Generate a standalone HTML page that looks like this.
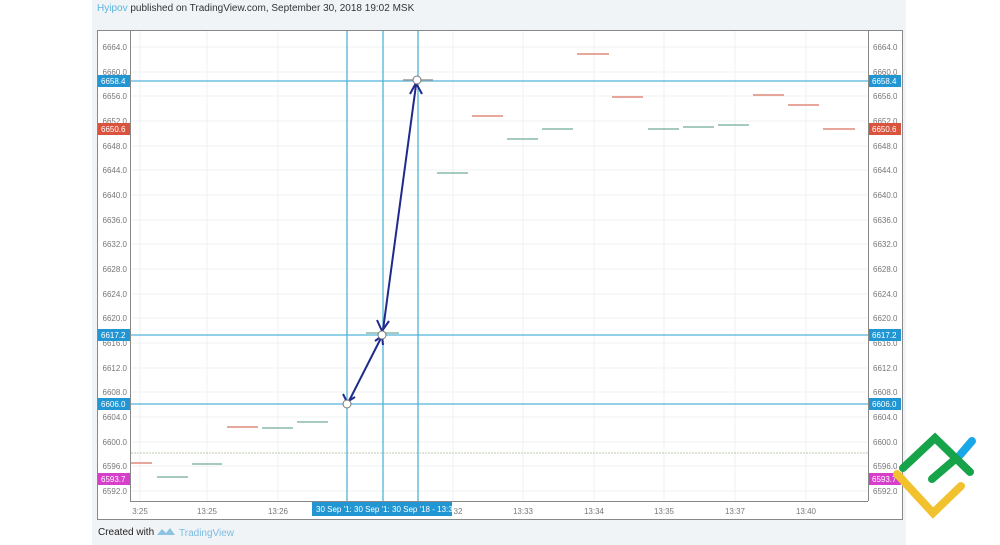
<!DOCTYPE html>
<html><head><style>
body{margin:0;width:1000px;height:545px;background:#fff;position:relative;overflow:hidden;font-family:"Liberation Sans",sans-serif}
.panel{position:absolute;left:92px;top:0;width:814px;height:545px;background:#f1f4f7}
.hdr{position:absolute;left:97px;top:3px;font-size:10px;color:#333}
.ftr{position:absolute;left:98px;top:527px;font-size:10px;color:#222}
</style></head><body>
<div class="panel"></div>
<div class="hdr"><span style="color:#5ab4dc">Hyipov</span> published on TradingView.com, September 30, 2018 19:02 MSK</div>
<svg style="position:absolute;left:0;top:0" width="1000" height="545" font-family="Liberation Sans, sans-serif">
<rect x="97.5" y="30.5" width="805" height="489" fill="#fff" stroke="#888"/>
<line x1="130.5" y1="30" x2="130.5" y2="501" stroke="#888"/>
<line x1="868.5" y1="30" x2="868.5" y2="501" stroke="#888"/>
<line x1="130" y1="501.5" x2="868" y2="501.5" stroke="#888"/>
<g stroke="#eef1f4">
<line x1="131" y1="47" x2="868" y2="47"/><line x1="131" y1="72" x2="868" y2="72"/><line x1="131" y1="96" x2="868" y2="96"/><line x1="131" y1="121" x2="868" y2="121"/><line x1="131" y1="146" x2="868" y2="146"/><line x1="131" y1="170" x2="868" y2="170"/><line x1="131" y1="195" x2="868" y2="195"/><line x1="131" y1="220" x2="868" y2="220"/><line x1="131" y1="244" x2="868" y2="244"/><line x1="131" y1="269" x2="868" y2="269"/><line x1="131" y1="294" x2="868" y2="294"/><line x1="131" y1="318" x2="868" y2="318"/><line x1="131" y1="343" x2="868" y2="343"/><line x1="131" y1="368" x2="868" y2="368"/><line x1="131" y1="392" x2="868" y2="392"/><line x1="131" y1="417" x2="868" y2="417"/><line x1="131" y1="442" x2="868" y2="442"/><line x1="131" y1="466" x2="868" y2="466"/><line x1="131" y1="491" x2="868" y2="491"/>
<line x1="140" y1="31" x2="140" y2="501"/><line x1="207" y1="31" x2="207" y2="501"/><line x1="278" y1="31" x2="278" y2="501"/><line x1="453" y1="31" x2="453" y2="501"/><line x1="523" y1="31" x2="523" y2="501"/><line x1="594" y1="31" x2="594" y2="501"/><line x1="664" y1="31" x2="664" y2="501"/><line x1="735" y1="31" x2="735" y2="501"/><line x1="806" y1="31" x2="806" y2="501"/>
</g>
<g font-size="8" fill="#777">
<g text-anchor="end">
<text x="127" y="50">6664.0</text><text x="127" y="75">6660.0</text><text x="127" y="99">6656.0</text><text x="127" y="124">6652.0</text><text x="127" y="149">6648.0</text><text x="127" y="173">6644.0</text><text x="127" y="198">6640.0</text><text x="127" y="223">6636.0</text><text x="127" y="247">6632.0</text><text x="127" y="272">6628.0</text><text x="127" y="297">6624.0</text><text x="127" y="321">6620.0</text><text x="127" y="346">6616.0</text><text x="127" y="371">6612.0</text><text x="127" y="395">6608.0</text><text x="127" y="420">6604.0</text><text x="127" y="445">6600.0</text><text x="127" y="469">6596.0</text><text x="127" y="494">6592.0</text>
</g>
<text x="873" y="50">6664.0</text><text x="873" y="75">6660.0</text><text x="873" y="99">6656.0</text><text x="873" y="124">6652.0</text><text x="873" y="149">6648.0</text><text x="873" y="173">6644.0</text><text x="873" y="198">6640.0</text><text x="873" y="223">6636.0</text><text x="873" y="247">6632.0</text><text x="873" y="272">6628.0</text><text x="873" y="297">6624.0</text><text x="873" y="321">6620.0</text><text x="873" y="346">6616.0</text><text x="873" y="371">6612.0</text><text x="873" y="395">6608.0</text><text x="873" y="420">6604.0</text><text x="873" y="445">6600.0</text><text x="873" y="469">6596.0</text><text x="873" y="494">6592.0</text>
<g text-anchor="middle"><text x="140" y="514">3:25</text><text x="207" y="514">13:25</text><text x="278" y="514">13:26</text><text x="458" y="514">32</text><text x="523" y="514">13:33</text><text x="594" y="514">13:34</text><text x="664" y="514">13:35</text><text x="735" y="514">13:37</text><text x="806" y="514">13:40</text></g>
</g>
<line x1="131" y1="453" x2="868" y2="453" stroke="#b8cbb0" stroke-dasharray="2,1"/>
<g stroke="#4fb3d9" stroke-width="1.3"><line x1="347" y1="31" x2="347" y2="501"/><line x1="383" y1="31" x2="383" y2="501"/><line x1="418" y1="31" x2="418" y2="501"/>
<line x1="131" y1="81" x2="868" y2="81"/><line x1="131" y1="335" x2="868" y2="335"/><line x1="131" y1="404" x2="868" y2="404"/></g>
<g stroke-width="1.5">
<line x1="131" y1="463" x2="152" y2="463" stroke="#e08a7a"/><line x1="157" y1="477" x2="188" y2="477" stroke="#8ab8a8"/><line x1="192" y1="464" x2="222" y2="464" stroke="#8ab8a8"/><line x1="227" y1="427" x2="258" y2="427" stroke="#e08a7a"/><line x1="262" y1="428" x2="293" y2="428" stroke="#8ab8a8"/><line x1="297" y1="422" x2="328" y2="422" stroke="#8ab8a8"/><line x1="366" y1="333" x2="399" y2="333" stroke="#8ab8a8"/><line x1="403" y1="80" x2="433" y2="80" stroke="#999"/><line x1="437" y1="173" x2="468" y2="173" stroke="#8ab8a8"/><line x1="472" y1="116" x2="503" y2="116" stroke="#e08a7a"/><line x1="507" y1="139" x2="538" y2="139" stroke="#8ab8a8"/><line x1="542" y1="129" x2="573" y2="129" stroke="#8ab8a8"/><line x1="577" y1="54" x2="609" y2="54" stroke="#e08a7a"/><line x1="612" y1="97" x2="643" y2="97" stroke="#e08a7a"/><line x1="648" y1="129" x2="679" y2="129" stroke="#8ab8a8"/><line x1="683" y1="127" x2="714" y2="127" stroke="#8ab8a8"/><line x1="718" y1="125" x2="749" y2="125" stroke="#8ab8a8"/><line x1="753" y1="95" x2="784" y2="95" stroke="#e08a7a"/><line x1="788" y1="105" x2="819" y2="105" stroke="#e08a7a"/><line x1="823" y1="129" x2="855" y2="129" stroke="#e08a7a"/>
</g>
<g stroke="#1f2a8c" stroke-width="2" fill="none">
<line x1="349" y1="401" x2="381" y2="338"/><polyline points="343,394 347,402 355,397"/><polyline points="375,341 382,336 383,345"/>
<line x1="383" y1="330" x2="416" y2="85"/><polyline points="377,320 382,331 389,321"/><polyline points="410,94 416,83 422,94"/>
</g>
<g fill="#fff" stroke="#777"><circle cx="347" cy="404" r="4"/><circle cx="382" cy="335" r="4"/><circle cx="417" cy="80" r="4"/></g>
<g font-size="8" fill="#fff">
<rect x="98" y="75" width="32" height="12" fill="#2196d3"/><text x="101" y="84">6658.4</text>
<rect x="98" y="123" width="32" height="12" fill="#d9533e"/><text x="101" y="132">6650.6</text>
<rect x="98" y="329" width="32" height="12" fill="#2196d3"/><text x="101" y="338">6617.2</text>
<rect x="98" y="398" width="32" height="12" fill="#2196d3"/><text x="101" y="407">6606.0</text>
<rect x="98" y="473" width="32" height="12" fill="#d63fc9"/><text x="101" y="482">6593.7</text>
<rect x="869" y="75" width="32" height="12" fill="#2196d3"/><text x="872" y="84">6658.4</text>
<rect x="869" y="123" width="32" height="12" fill="#d9533e"/><text x="872" y="132">6650.6</text>
<rect x="869" y="329" width="32" height="12" fill="#2196d3"/><text x="872" y="338">6617.2</text>
<rect x="869" y="398" width="32" height="12" fill="#2196d3"/><text x="872" y="407">6606.0</text>
<rect x="869" y="473" width="32" height="12" fill="#d63fc9"/><text x="872" y="482">6593.7</text>
<rect x="312" y="502" width="140" height="14" fill="#2196d3"/><text x="316" y="512">30 Sep '1: 30 Sep '1: 30 Sep '18 - 13:32</text>
</g>
<g stroke-linecap="round" fill="none" stroke-width="8">
<line x1="960" y1="455" x2="972" y2="441" stroke="#1aa7e8"/>
<polyline points="903,468 935,438 970,472" stroke="#16a34a"/>
<line x1="932" y1="479" x2="953" y2="461" stroke="#16a34a"/>
<polyline points="897,474 933,513 961,486" stroke="#f2c12e"/>
</g>
<g transform="translate(157,527)"><path d="M0 8 L5 2 L9 6 L13 1 L18 8 Z" fill="#8cc3e3"/></g>
<text x="179" y="536" font-size="10" fill="#7bbbe0">TradingView</text>
</svg>
<div class="ftr">Created with</div>
</body></html>
